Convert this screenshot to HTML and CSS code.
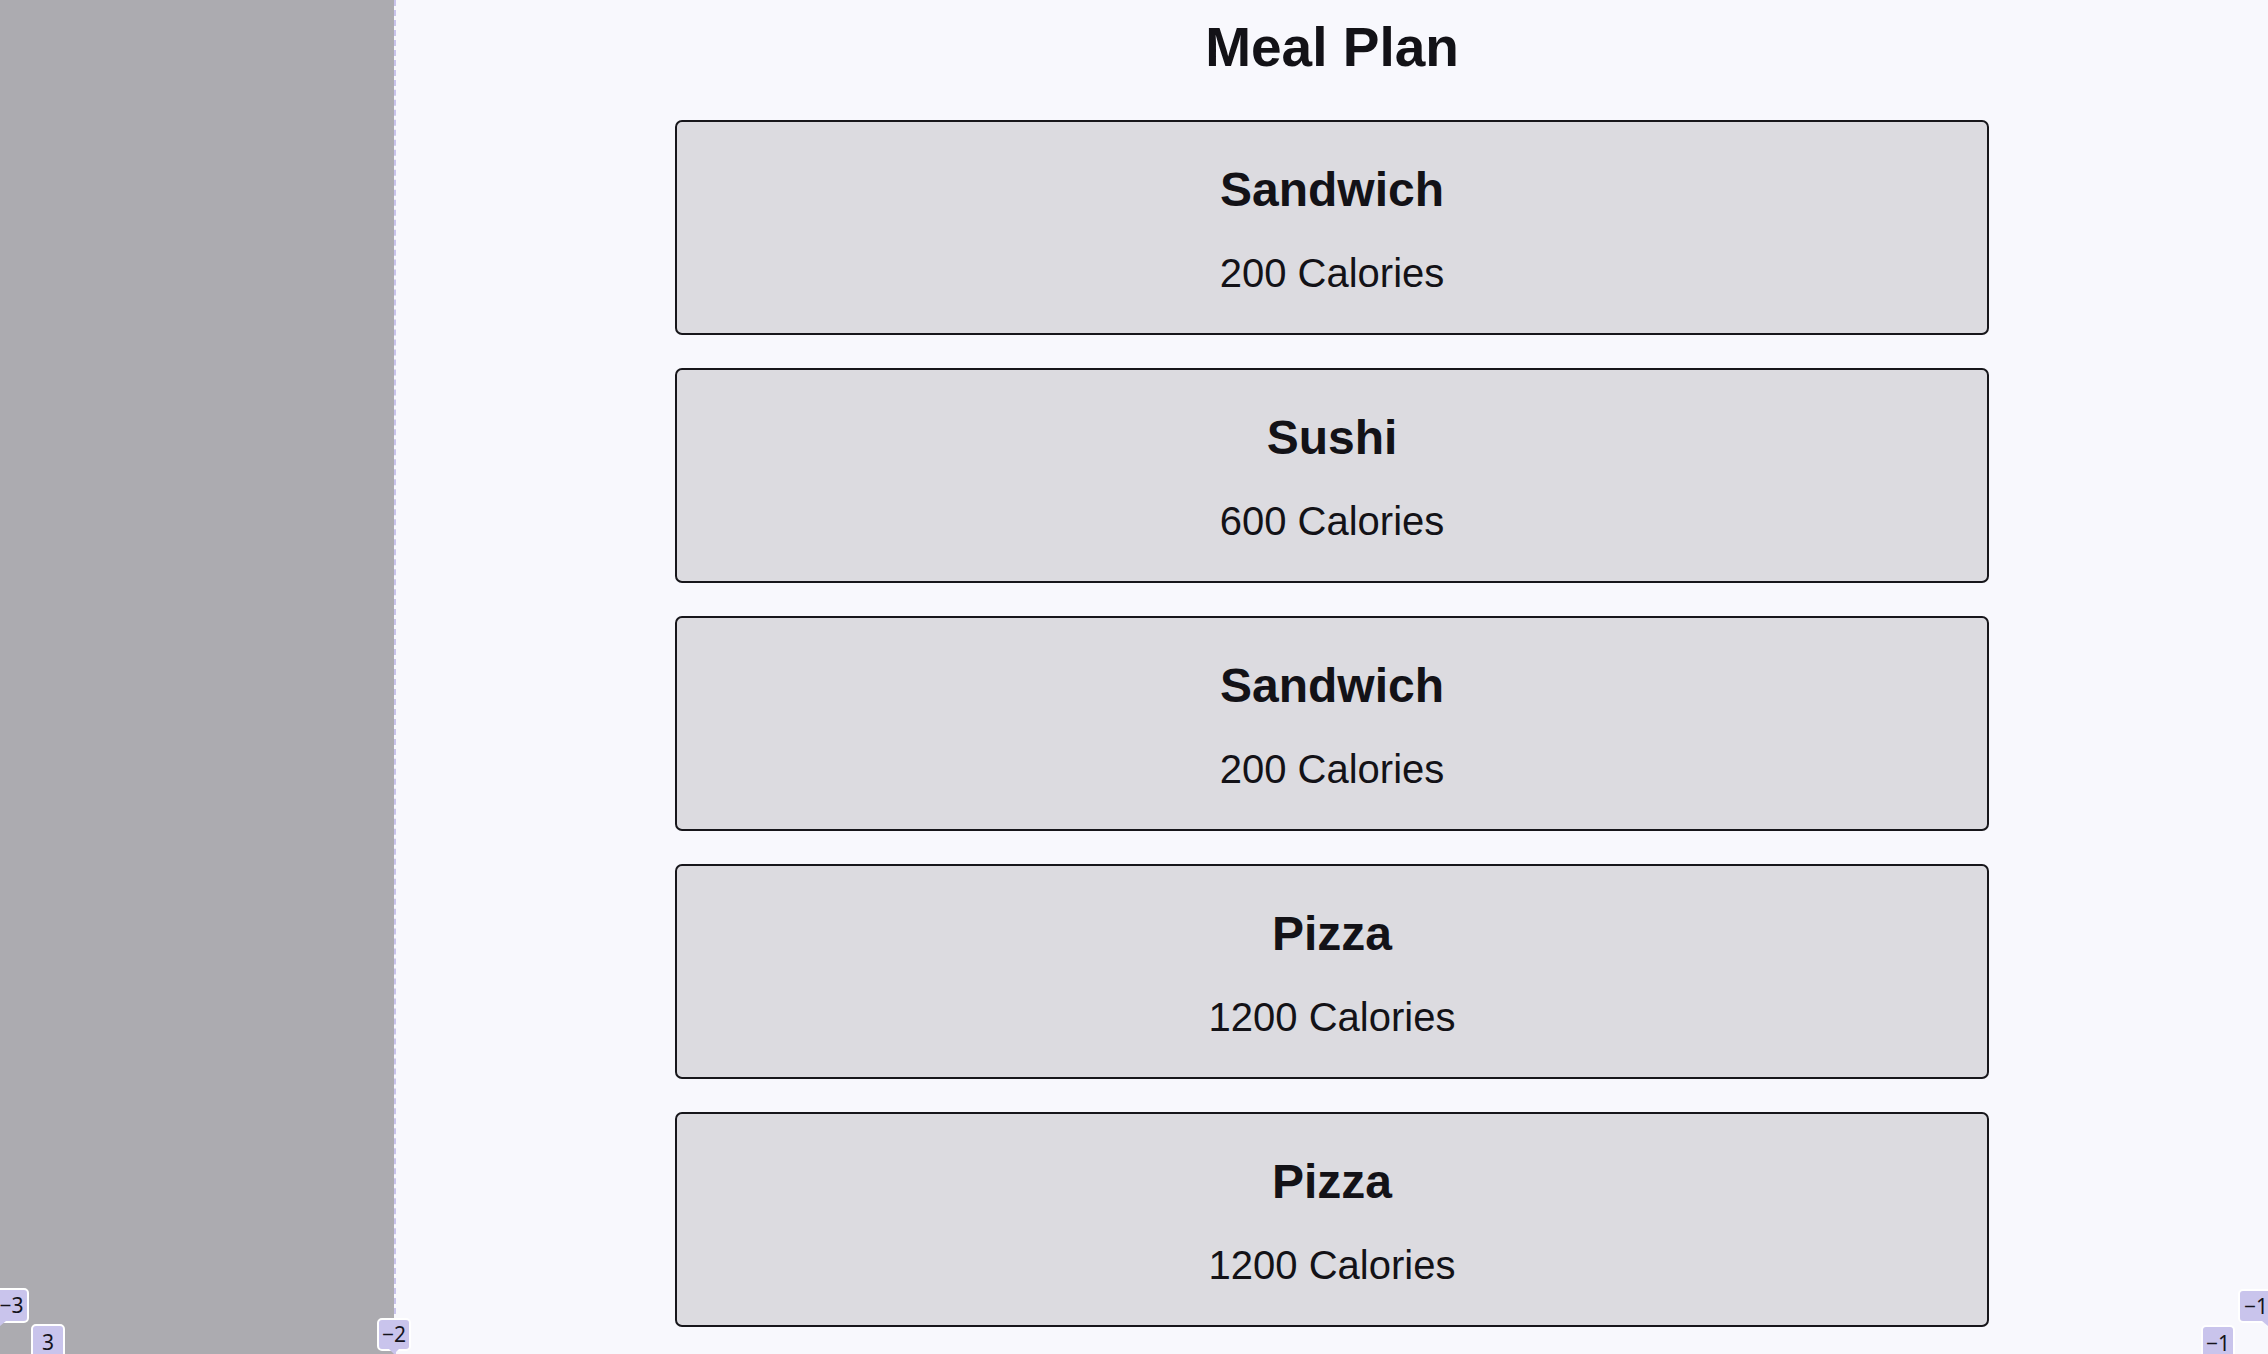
FILE: index.html
```html
<!DOCTYPE html>
<html lang="en">
<head>
<meta charset="utf-8">
<title>Meal Plan</title>
<link rel="stylesheet" href="styles.css">
</head>
<body>
<div class="layout">
  <aside class="sidebar"></aside>
  <main class="main">
    <h1 class="title">Meal Plan</h1>
    <div class="meals">
      <div class="meal">
        <h2 class="meal-name">Sandwich</h2>
        <p class="meal-cal">200 Calories</p>
      </div>
      <div class="meal">
        <h2 class="meal-name">Sushi</h2>
        <p class="meal-cal">600 Calories</p>
      </div>
      <div class="meal">
        <h2 class="meal-name">Sandwich</h2>
        <p class="meal-cal">200 Calories</p>
      </div>
      <div class="meal">
        <h2 class="meal-name">Pizza</h2>
        <p class="meal-cal">1200 Calories</p>
      </div>
      <div class="meal">
        <h2 class="meal-name">Pizza</h2>
        <p class="meal-cal">1200 Calories</p>
      </div>
    </div>
  </main>
</div>
<div class="grid-overlay">
  <span class="badge badge-col1 tail-bl">&minus;3</span>
  <span class="badge badge-row3">3</span>
  <span class="badge badge-col2 tail-bc">&minus;2</span>
  <span class="badge badge-col3 tail-br">&minus;1</span>
  <span class="badge badge-row-end">&minus;1</span>
</div>
</body>
</html>
```

FILE: styles.css
```css
* {
  box-sizing: border-box;
}

html, body {
  margin: 0;
  padding: 0;
  height: 100%;
  overflow: hidden;
}

body {
  font-family: "Liberation Sans", Arial, sans-serif;
  color: #131217;
  background: #f8f8fd;
  position: relative;
}

.layout {
  display: grid;
  grid-template-columns: 394px 1fr;
  height: 100vh;
}

.sidebar {
  background: #acabb0;
}

.main {
  border-left: 2px dashed #c9c4ec;
  padding-top: 15px;
  text-align: center;
}

.title {
  margin: 0 0 41px;
  font-size: 55px;
  line-height: 64px;
  font-weight: 700;
}

.meals {
  display: flex;
  flex-direction: column;
  align-items: center;
  gap: 33px;
}

.meal {
  width: 70.15%;
  height: 215px;
  background: #dcdbe0;
  border: 2px solid #17161b;
  border-radius: 7px;
  padding: 40px 20px 36px;
}

.meal-name {
  margin: 0 0 31px;
  font-size: 48px;
  line-height: 56px;
  font-weight: 700;
}

.meal-cal {
  margin: 0;
  font-size: 40px;
  line-height: 48px;
}

.grid-overlay {
  position: absolute;
  inset: 0;
  pointer-events: none;
}

.badge {
  position: absolute;
  display: flex;
  align-items: center;
  justify-content: center;
  background: #c9c4ec;
  border: 2px solid #ffffff;
  border-radius: 5px;
  font-family: "Noto Sans", "DejaVu Sans", sans-serif;
  font-size: 21px;
  line-height: 1;
  color: #15141c;
}

.badge-col1 {
  left: -6px;
  top: 1288px;
  width: 35px;
  height: 35px;
}

.badge-row3 {
  left: 31px;
  top: 1324px;
  width: 34px;
  height: 36px;
}

.badge-col2 {
  left: 377px;
  top: 1318px;
  width: 34px;
  height: 33px;
}

.badge-col3 {
  left: 2238px;
  top: 1289px;
  width: 36px;
  height: 34px;
}

.badge-row-end {
  left: 2201px;
  top: 1325px;
  width: 34px;
  height: 36px;
}

.tail-bl::after,
.tail-bc::after,
.tail-br::after {
  content: "";
  position: absolute;
  top: 100%;
  width: 0;
  height: 0;
  border-top: 5px solid #c9c4ec;
}

.tail-bl::after {
  left: 4px;
  border-right: 6px solid transparent;
}

.tail-bc::after {
  left: 50%;
  margin-left: -5px;
  border-left: 5px solid transparent;
  border-right: 5px solid transparent;
}

.tail-br::after {
  right: 4px;
  border-left: 6px solid transparent;
}
```
